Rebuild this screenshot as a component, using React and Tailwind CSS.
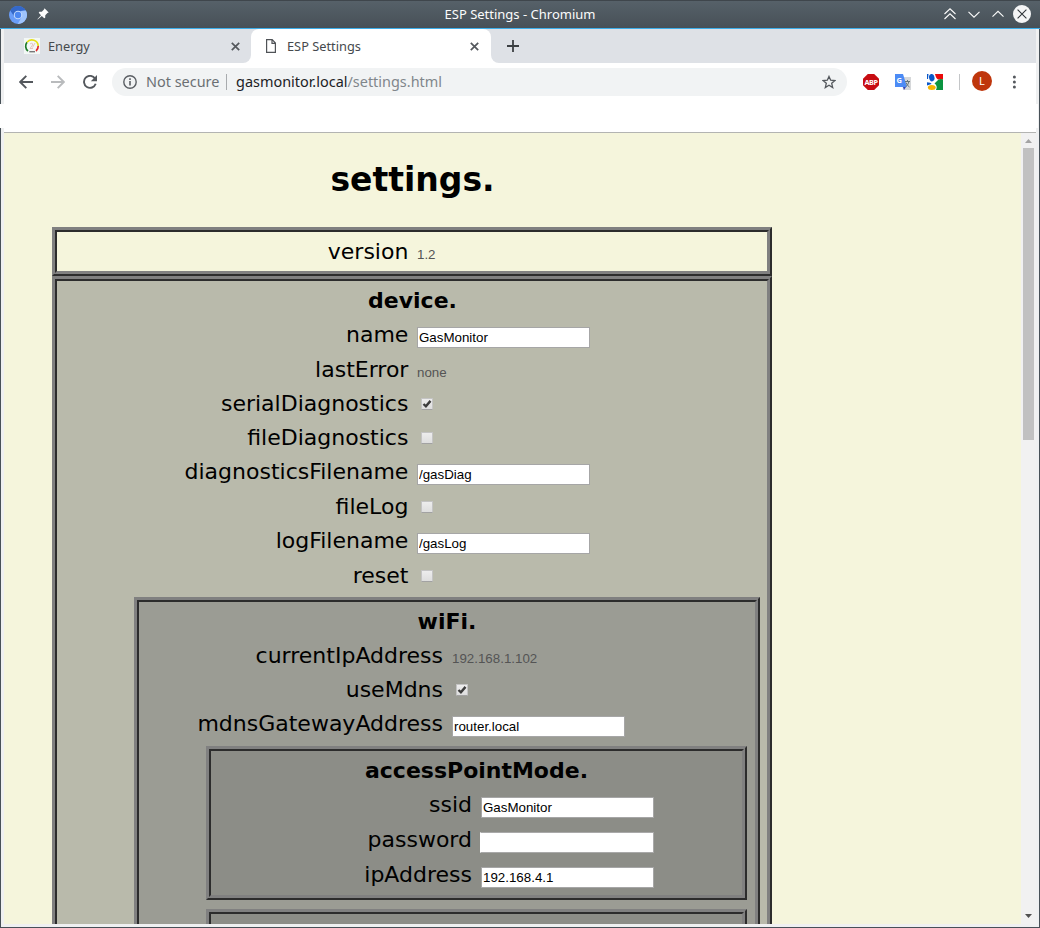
import React from "react";

function ChromiumLogo() {
  return (
    <svg width="18" height="18" viewBox="0 0 18 18">
      <circle cx="9" cy="9" r="9" fill="#6a9df8" />
      <path d="M1.2 4.5A9 9 0 0 1 16.8 4.6L9 5.2 5.6 11Z" fill="#3468c9" />
      <path d="M16.8 4.6A9 9 0 0 1 8.8 18L12.6 11 12 5Z" fill="#9fc3fb" />
      <circle cx="9" cy="9" r="4.3" fill="#c4dafc" />
      <circle cx="9" cy="9" r="3.2" fill="#4b86f0" />
    </svg>
  );
}

function Pin() {
  return (
    <svg width="12" height="12" viewBox="0 0 12 12" fill="#fcfcfc" className="-mt-0.5">
      <path d="M7.5 0.3 11.7 4.5 10.4 5 8.3 7.2 8.2 9.7 7.2 10.3 4.8 8 0.7 11.6 0.4 11.3 4 7.2 1.7 4.8 2.4 3.8 4.8 3.7 7 1.6Z" />
    </svg>
  );
}

function TitleBar() {
  return (
    <div className="grid h-7 grid-cols-[1fr_auto_1fr] items-center border-t border-[#3f464c] bg-linear-to-b from-[#566169] to-[#475057]">
      <div className="flex items-center gap-[10px] pl-[9px]">
        <ChromiumLogo />
        <Pin />
      </div>
      <span className="text-[13px] text-[#fcfcfc]">ESP Settings - Chromium</span>
      <div className="flex items-center justify-end pr-[9px]">
        <svg width="12" height="12" viewBox="0 0 12 12" fill="none" stroke="#fcfcfc" strokeWidth="1.1" className="mr-3 -mt-0.5">
          <path d="M0.5 6 6 0.8 11.5 6M0.5 11 6 5.8 11.5 11" />
        </svg>
        <svg width="12" height="12" viewBox="0 0 12 12" fill="none" stroke="#fcfcfc" strokeWidth="1.1" className="mr-3 -mt-0.5">
          <path d="M0.5 3.8 6 9.2 11.5 3.8" />
        </svg>
        <svg width="12" height="12" viewBox="0 0 12 12" fill="none" stroke="#fcfcfc" strokeWidth="1.1" className="mr-[9px] -mt-0.5">
          <path d="M0.5 8.7 6 3.3 11.5 8.7" />
        </svg>
        <svg width="18" height="18" viewBox="0 0 18 18" className="-mt-0.5">
          <circle cx="9" cy="9" r="9" fill="#f4f5f6" />
          <path d="M4.6 4.6 13.4 13.4M13.4 4.6 4.6 13.4" stroke="#31363b" strokeWidth="1.1" />
        </svg>
      </div>
    </div>
  );
}

function TabClose() {
  return (
    <svg width="9" height="9" viewBox="0 0 9 9" stroke="#54585d" strokeWidth="1.7">
      <path d="M0.8 0.8 8.2 8.2M8.2 0.8 0.8 8.2" />
    </svg>
  );
}

function Tabs() {
  return (
    <div className="flex h-[34px] bg-white text-[12.8px] text-[#45494d]">
      <div className="flex w-[247px] items-center rounded-br-lg bg-[#dee1e6] pl-5 pr-[11px]">
        <svg width="16" height="16" viewBox="0 0 16 16" fill="none">
          <rect width="16" height="16" fill="#f3f8f6" />
          <path d="M4 13A6.3 6.3 0 0 1 3 4.2" stroke="#1f7a2a" strokeWidth="1.7" />
          <path d="M3 4.2A6.3 6.3 0 0 1 14.2 8" stroke="#e5df18" strokeWidth="1.7" />
          <path d="M14.2 8A6.3 6.3 0 0 1 12 13" stroke="#e32a2a" strokeWidth="1.7" />
          <path d="M6 6Q9 4 8.5 7L6 10.5H9M8.5 9.5 11 5" stroke="#e2b5b0" strokeWidth="0.8" />
          <path d="M5.3 13.7H11" stroke="#777" strokeWidth="1.4" />
        </svg>
        <span className="ml-2 flex-1 pt-0.5">Energy</span>
        <TabClose />
      </div>
      <div className="flex w-[240px] bg-[#dee1e6]">
        <div className="flex flex-1 items-center rounded-t-lg bg-white pl-[15px] pr-[12px]">
          <svg width="10" height="14" viewBox="0 0 10 14" fill="none" stroke="#505357" strokeWidth="1.2">
            <path d="M0.6 0.6H6.2L9.4 4V13.4H0.6ZM6 0.8V4.3H9.2" />
          </svg>
          <span className="ml-[11px] flex-1 pt-0.5">ESP Settings</span>
          <TabClose />
        </div>
      </div>
      <div className="flex flex-1 items-center rounded-bl-lg bg-[#dee1e6] pl-4">
        <svg width="12" height="12" viewBox="0 0 12 12" stroke="#3c4043" strokeWidth="1.8">
          <path d="M6 0V12M0 6H12" />
        </svg>
      </div>
    </div>
  );
}

function Toolbar() {
  return (
    <div className="flex h-[70px] items-start border-b border-[#b3b4b2] bg-white pt-[5px]">
      <div className="flex h-7 w-[108px] items-center pb-px pl-[15px]">
        <svg width="14" height="14" viewBox="0 0 14 14" fill="none" stroke="#54585d" strokeWidth="1.9">
          <path d="M14 7H1.5M7.3 0.8 1.2 7 7.3 13.2" />
        </svg>
        <svg width="14" height="14" viewBox="0 0 14 14" fill="none" stroke="#b9bbbd" strokeWidth="1.9" className="ml-[18px]">
          <path d="M0 7H12.5M6.7 0.8 12.8 7 6.7 13.2" />
        </svg>
        <svg width="14" height="14" viewBox="0 0 14 14" fill="none" className="ml-[18px]">
          <path d="M12 3.5A6 6 0 1 0 12.7 8.8" stroke="#54585d" strokeWidth="1.9" />
          <path d="M14 0V6.2H7.8Z" fill="#54585d" />
        </svg>
      </div>
      <div className="flex h-7 w-[735px] items-center rounded-full bg-[#f1f3f4] pl-[11px] pr-[11px] text-[14.45px]">
        <svg width="14" height="14" viewBox="0 0 14 14" fill="none" stroke="#5a5e63" strokeWidth="1.4">
          <circle cx="7" cy="7" r="6.2" />
          <path d="M7 6V10.6M7 3.3V4.9" strokeWidth="1.6" />
        </svg>
        <span className="ml-[9px] w-[80px] whitespace-nowrap text-[#6b6f73]">Not secure</span>
        <span className="h-4 w-px bg-[#a8abae]" />
        <span className="ml-[9px] flex-1 text-[#202124]">
          gasmonitor.local<span className="text-[#80868b]">/settings.html</span>
        </span>
        <svg width="14" height="14" viewBox="0 0 14 14" fill="none" stroke="#54585d" strokeWidth="1.3">
          <path d="M7 1.4 8.7 5.2 12.9 5.6 9.7 8.3 10.7 12.5 7 10.2 3.3 12.5 4.3 8.3 1.1 5.6 5.3 5.2Z" />
        </svg>
      </div>
      <div className="flex h-7 flex-1 items-center pl-4">
        <span className="flex size-4 items-center justify-center bg-[#c70d12] text-[7.3px] leading-4 font-bold tracking-[-0.4px] text-white [clip-path:polygon(30%_0,70%_0,100%_30%,100%_70%,70%_100%,30%_100%,0_70%,0_30%)]">
          ABP
        </span>
        <svg width="16" height="16" viewBox="0 0 16 16" className="ml-4">
          <path d="M6 3H16V16H8Z" fill="#d6d8da" />
          <path d="M8 13H11L9 16Z" fill="#3444b5" />
          <path d="M0 0H8L12 13H0Z" fill="#4c8bf5" />
          <text x="1.6" y="9" fontSize="7.5" fontWeight="700" fill="#fff">G</text>
          <path d="M10 7.5H15M12.5 6V7.5M14 7.5Q13 11 11 12.5M11 8.5Q12 11.5 14.5 13" fill="none" stroke="#64757c" />
        </svg>
        <svg width="16" height="16" viewBox="0 0 16 16" className="ml-4">
          <rect width="16" height="16" fill="#fff" />
          <path d="M8 0H16V5.5H11Q9 4.5 8 0Z" fill="#ea0b0b" />
          <path d="M9 8Q12 4 16 5.5V16H9Q11 12 7.5 9.5Z" fill="#0a9440" />
          <path d="M0 0H1.5L1 5H0Z" fill="#0a58c9" />
          <ellipse cx="4.8" cy="3.7" rx="2.7" ry="3.7" fill="#0a58c9" transform="rotate(-12 4.8 3.7)" />
          <path d="M0 8.2Q4 8.2 4.5 10L0 11.5Z" fill="#0a58c9" />
          <ellipse cx="4.8" cy="13.5" rx="3.9" ry="2.5" fill="#f4b400" />
        </svg>
        <span className="ml-4 h-4 w-px bg-[#c4c6c8]" />
        <span className="-mt-0.5 ml-3 flex size-5 items-center justify-center rounded-full bg-[#bf360c] text-[11px] text-white">L</span>
        <svg width="4" height="14" viewBox="0 0 4 14" fill="#54585d" className="ml-5">
          <circle cx="2.4" cy="2" r="1.5" />
          <circle cx="2.4" cy="7" r="1.5" />
          <circle cx="2.4" cy="12" r="1.5" />
        </svg>
      </div>
    </div>
  );
}

const BOX = "border-[5px] border-[gray] [border-style:ridge]";

function Heading({ children, className = "" }) {
  return <h2 className={"h-[34px] text-center text-[22px] leading-[36px] font-bold " + className}>{children}</h2>;
}

function TextBox({ value, autofilled }) {
  return (
    <input
      type="text"
      defaultValue={value}
      className={
        "mt-[10px] h-[21px] border bg-white px-px text-[13.33px] leading-[15px] text-black outline-none " +
        (autofilled
          ? "-ml-px w-[174px] border-[#a9a9a9] border-l-white"
          : "w-[173px] border-[#a6a6a6]")
      }
    />
  );
}

function CheckBox({ checked }) {
  return (
    <span className="mt-3 ml-1 size-3 rounded-[1px] border border-[#c4c4c4] border-b-[#a2a2a2] bg-linear-to-b from-[#ededed] to-[#dedede]">
      {checked && (
        <svg width="10" height="10" viewBox="0 0 10 10" fill="none" stroke="#3c3c3c" strokeWidth="2.4">
          <path d="M1.5 5 3.9 7.3 8.5 1.9" />
        </svg>
      )}
    </span>
  );
}

function Row({ label, labelWidth, tall, text, value, check, autofilled }) {
  return (
    <div className={"flex items-start gap-[9px] " + (tall ? "h-[35px]" : "h-[34px]")}>
      <span className={"shrink-0 text-right text-[22px] leading-[36px] " + labelWidth}>{label}</span>
      {text !== undefined && (
        <span className="pt-[13px] text-[13.33px] leading-[15px] text-[#545454] font-['Liberation_Sans',sans-serif]">{text}</span>
      )}
      {value !== undefined && (
        <span className="flex font-['Liberation_Sans',sans-serif]">
          <TextBox value={value} autofilled={autofilled} />
        </span>
      )}
      {check !== undefined && <CheckBox checked={check} />}
    </div>
  );
}

const DEVICE = "w-[351.4px] -mr-[0.4px]";
const WIFI = "w-[304px]";
const ACCESS = "w-[261px]";

function SettingsPage() {
  return (
    <main className="flex-1 overflow-hidden bg-[#f5f5dc] pl-12 font-['DejaVu_Sans',sans-serif] text-black">
      <div className="w-[720px]">
        <h1 className="h-[94px] pt-6 pl-px text-center text-[33px] leading-[46px] font-bold">settings.</h1>
        <section className={BOX + " h-[49px] pt-[2px]"}>
          <Row label="version" labelWidth={DEVICE} text="1.2" />
        </section>
        <section className={BOX + " bg-[#b9baab] pt-[2px]"}>
          <Heading className="pl-px">device.</Heading>
          <Row label="name" labelWidth={DEVICE} value="GasMonitor" tall />
          <Row label="lastError" labelWidth={DEVICE} text="none" />
          <Row label="serialDiagnostics" labelWidth={DEVICE} check={true} />
          <Row label="fileDiagnostics" labelWidth={DEVICE} check={false} />
          <Row label="diagnosticsFilename" labelWidth={DEVICE} value="/gasDiag" tall />
          <Row label="fileLog" labelWidth={DEVICE} check={false} />
          <Row label="logFilename" labelWidth={DEVICE} value="/gasLog" tall />
          <Row label="reset" labelWidth={DEVICE} check={false} />
          <section className={BOX + " mt-[5px] mr-[7px] ml-[77px] bg-[#9b9c94] pt-[2px]"}>
            <Heading>wiFi.</Heading>
            <Row label="currentIpAddress" labelWidth={WIFI} text="192.168.1.102" />
            <Row label="useMdns" labelWidth={WIFI} check={true} />
            <Row label="mdnsGatewayAddress" labelWidth={WIFI} value="router.local" />
            <section className={BOX + " mt-[6px] mr-2 ml-[67px] h-[154px] bg-[#8c8d87] pt-[2px]"}>
              <Heading>accessPointMode.</Heading>
              <Row label="ssid" labelWidth={ACCESS} value="GasMonitor" tall />
              <Row label="password" labelWidth={ACCESS} value="" autofilled tall />
              <Row label="ipAddress" labelWidth={ACCESS} value="192.168.4.1" />
            </section>
            <section className={BOX + " mt-[9px] mr-2 ml-[67px] h-[154px] bg-[#8c8d87]"} />
          </section>
        </section>
      </div>
    </main>
  );
}

function ScrollBar() {
  return (
    <div className="flex w-[15px] flex-col items-center bg-[#f1f1f1] pb-[6px] pt-[6px]">
      <svg width="7" height="4" viewBox="0 0 7 4" fill="#a3a3a3">
        <path d="M3.5 0 7 4H0Z" />
      </svg>
      <div className="mt-[5px] h-[292px] w-[11px] bg-[#c1c1c1]" />
      <div className="flex-1" />
      <svg width="7" height="4" viewBox="0 0 7 4" fill="#505050">
        <path d="M0 0H7L3.5 4Z" />
      </svg>
    </div>
  );
}

export default function App() {
  return (
    <div className="relative flex h-[928px] w-[1040px] flex-col overflow-hidden bg-[#475057] font-['Noto_Sans',sans-serif]">
      <TitleBar />
      <div className="h-px bg-[#3daee9]" />
      <div className="mx-px mb-px flex flex-1 flex-col overflow-hidden bg-[#eff0f1] px-[3px] pb-[3px]">
        <Tabs />
        <Toolbar />
        <div className="flex min-h-0 flex-1">
          <SettingsPage />
          <ScrollBar />
        </div>
      </div>
      <div className="absolute top-[104px] left-0 h-6 w-[1038px] bg-white" />
    </div>
  );
}
